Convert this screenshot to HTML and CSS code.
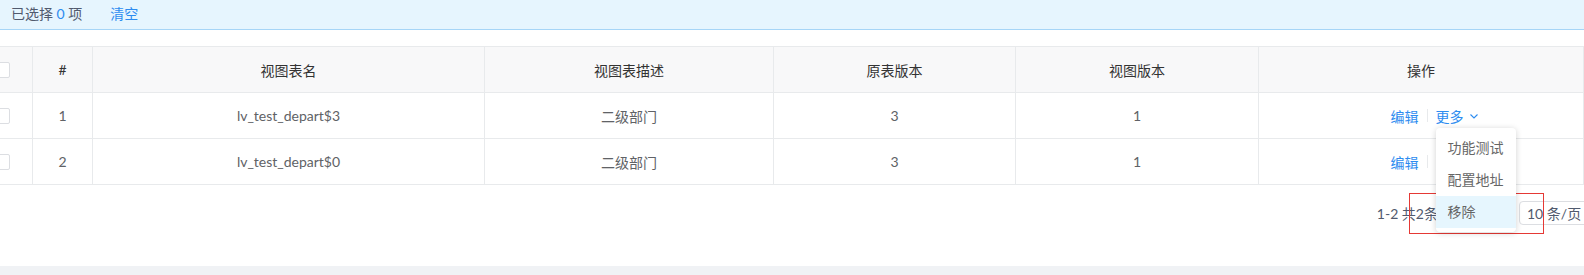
FILE: index.html
```html
<!DOCTYPE html>
<html lang="zh">
<head>
<meta charset="utf-8">
<link rel="stylesheet" href="styles.css">
</head>
<body>
<div class="page">
  <div class="alert">
    <span class="sel">已选择 <span class="num">0</span> 项</span>
    <a class="clear">清空</a>
  </div>

  <div class="table-wrap">
    <div class="table">
      <div class="row head">
        <div class="cell"><span class="chk"></span></div>
        <div class="cell">#</div>
        <div class="cell">视图表名</div>
        <div class="cell">视图表描述</div>
        <div class="cell">原表版本</div>
        <div class="cell">视图版本</div>
        <div class="cell">操作</div>
      </div>
      <div class="row">
        <div class="cell"><span class="chk"></span></div>
        <div class="cell">1</div>
        <div class="cell">lv_test_depart$3</div>
        <div class="cell">二级部门</div>
        <div class="cell">3</div>
        <div class="cell">1</div>
        <div class="cell actions">
          <a class="link">编辑</a>
          <span class="divider"></span>
          <span class="more">
            <a class="link">更多</a>
            <svg class="chev" width="8" height="5" viewBox="0 0 8 5"><path d="M0.5 0.5 L4 4 L7.5 0.5" fill="none" stroke="#2d8cf0" stroke-width="1.1"/></svg>
            <div class="menu">
              <div class="item">功能测试</div>
              <div class="item">配置地址</div>
              <div class="item active">移除</div>
            </div>
          </span>
        </div>
      </div>
      <div class="row">
        <div class="cell"><span class="chk"></span></div>
        <div class="cell">2</div>
        <div class="cell">lv_test_depart$0</div>
        <div class="cell">二级部门</div>
        <div class="cell">3</div>
        <div class="cell">1</div>
        <div class="cell actions">
          <a class="link">编辑</a>
          <span class="divider"></span>
          <span class="more">
            <a class="link">更多</a>
            <svg class="chev" width="8" height="5" viewBox="0 0 8 5"><path d="M0.5 0.5 L4 4 L7.5 0.5" fill="none" stroke="#2d8cf0" stroke-width="1.1"/></svg>
          </span>
        </div>
      </div>
    </div>
  </div>

  <div class="pager">
    <span class="total">1-2 共2条</span>
    <span class="select">10 条/页</span>
  </div>

  <div class="band"></div>
  <div class="annot"></div>
</div>
</body>
</html>
```

FILE: styles.css
```css
* { box-sizing: border-box; }
html, body { margin: 0; padding: 0; }
body {
  width: 1584px;
  height: 275px;
  overflow: hidden;
  background: #fff;
  font-family: "Lato", "Noto Sans CJK SC", sans-serif;
  font-size: 14px;
  color: #606266;
}
.page {
  position: relative;
  height: 275px;
  display: flex;
  flex-direction: column;
}
.alert {
  height: 30px;
  background: #e6f5fe;
  border-bottom: 1px solid #a6d5f7;
  display: flex;
  align-items: center;
  padding: 0 11px 4px;
  color: #515a6e;
}
.num { color: #2d8cf0; }
.clear { color: #2d8cf0; margin-left: 28px; cursor: pointer; }

.table-wrap {
  margin-top: 16px;
}
.table {
  width: 1612px;
  margin-left: -28px;
  border-top: 1px solid #e8eaec;
}
.row {
  display: grid;
  grid-template-columns: 61px 60px 392px 289px 242px 243px 325px;
}
.cell {
  height: 46px;
  border-right: 1px solid #e8eaec;
  border-bottom: 1px solid #e8eaec;
  display: flex;
  align-items: center;
  justify-content: center;
  white-space: nowrap;
}
.head .cell {
  background: #f8f8f9;
  color: #333;
}
.chk {
  width: 16px;
  height: 16px;
  border: 1px solid #dcdee2;
  border-radius: 2px;
  background: #fff;
}
.actions {
  padding-left: 26px;
}
.link { color: #2d8cf0; cursor: pointer; }
.divider {
  width: 1px;
  height: 13px;
  background: #e8eaec;
  margin: 0 8px;
}
.more {
  position: relative;
  display: flex;
  align-items: center;
}
.chev { margin-left: 6px; margin-top: 2px; }
.menu {
  position: absolute;
  left: 0;
  top: 22px;
  width: 80px;
  padding: 4px 0;
  background: #fff;
  border-radius: 4px;
  box-shadow: 0 1px 6px rgba(0, 0, 0, 0.18);
  z-index: 5;
}
.item {
  height: 32px;
  line-height: 32px;
  padding: 0 12px;
  color: #666;
}
.item.active { background: #e6f6fe; }

.pager {
  margin-top: 16px;
  margin-right: -16px;
  height: 24px;
  display: flex;
  align-items: center;
  justify-content: flex-end;
  color: #515a6e;
}
.select {
  margin-left: 81px;
  width: 81px;
  height: 24px;
  border: 1px solid #dcdee2;
  border-radius: 4px;
  display: flex;
  align-items: center;
  padding-left: 7px;
  white-space: nowrap;
}
.band {
  margin-top: auto;
  height: 9px;
  background: #f0f2f5;
}
.annot {
  position: absolute;
  left: 1409px;
  top: 193px;
  width: 135px;
  height: 41px;
  border: 1px solid #e53935;
  z-index: 2;
}
```
